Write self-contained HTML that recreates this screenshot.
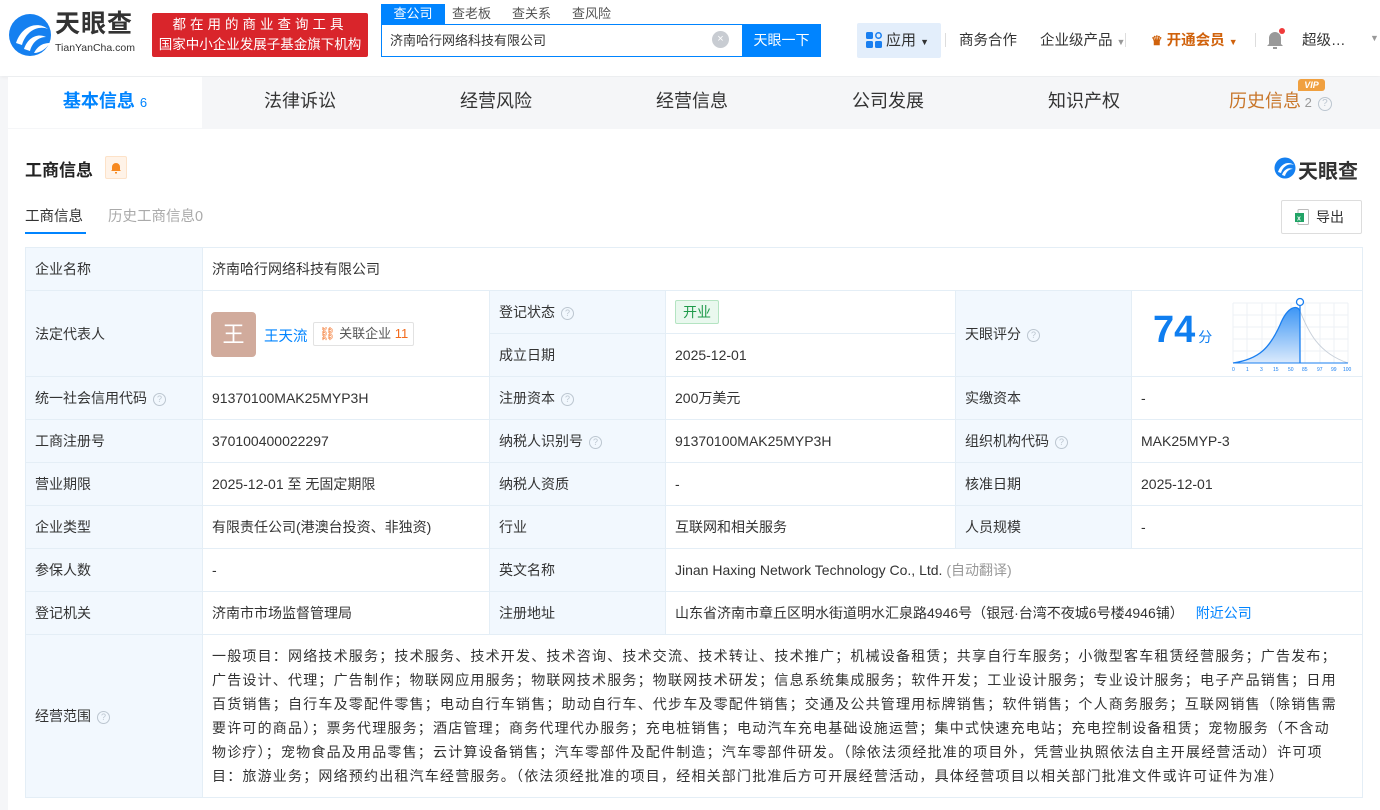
<!DOCTYPE html>
<html><head><meta charset="utf-8"><style>
*{box-sizing:border-box;margin:0;padding:0}
body{width:1380px;height:810px;overflow:hidden;background:#f5f6f8;font-family:"Liberation Sans","Noto Sans CJK SC",sans-serif;color:#333;font-size:14px;position:relative}
.hdr{position:absolute;left:0;top:0;width:1380px;height:76px;background:#fff;box-shadow:0 1px 4px rgba(0,0,0,.06)}
.abs{position:absolute}
.tabs{position:absolute;left:8px;top:77px;width:1372px;height:51px;background:#f5f6f8}
.tab{position:absolute;top:0;height:51px;line-height:48px;font-size:18px;color:#333;text-align:center}
.card{position:absolute;left:8px;top:129px;width:1372px;height:681px;background:#fff}
table{position:absolute;left:25px;top:247px;border-collapse:collapse;table-layout:fixed;width:1337px}
td{border:1px solid #e4eef6;padding:0 9px;font-size:14px;color:#333;vertical-align:middle}
td.l{background:#f2f8fe}
.q{display:inline-block;width:13px;height:13px;border:1px solid #bcc6d0;border-radius:50%;font-size:9px;line-height:11px;text-align:center;color:#bcc6d0;margin-left:6px;vertical-align:1px}
</style></head><body>
<div class="hdr">
 <svg class="abs" style="left:8px;top:13px" width="46" height="44" viewBox="0 0 46 44"><circle cx="22" cy="22" r="21" fill="#1580f0"/><path d="M8 30 C14 12 30 8 40 16 C30 12 18 18 14 32Z" fill="#fff"/><path d="M16 36 C20 24 30 20 38 24 C30 24 24 30 22 38Z" fill="#fff"/><path d="M26 40 C30 32 36 30 42 30 C38 36 32 40 26 40Z" fill="#fff"/></svg>
 <div class="abs" style="left:55px;top:9px;font-size:25px;line-height:30px;font-weight:bold;color:#333;letter-spacing:1px">天眼查</div>
 <div class="abs" style="left:55px;top:42px;font-size:10.5px;line-height:12px;color:#333">TianYanCha.com</div>
 <div class="abs" style="left:152px;top:13px;width:216px;height:44px;background:#d9252b;border-radius:2px;color:#fff;font-size:13.5px;text-align:center;line-height:20px;padding-top:2px"><span style="letter-spacing:4px">都在用的商业查询工具</span><br>国家中小企业发展子基金旗下机构</div>
 <div class="abs" style="left:381px;top:4px;width:64px;height:21px;background:#0084ff;color:#fff;font-size:13px;text-align:center;line-height:20px">查公司</div>
 <div class="abs" style="left:452px;top:4px;font-size:13px;color:#555;line-height:20px">查老板</div>
 <div class="abs" style="left:512px;top:4px;font-size:13px;color:#555;line-height:20px">查关系</div>
 <div class="abs" style="left:572px;top:4px;font-size:13px;color:#555;line-height:20px">查风险</div>
 <div class="abs" style="left:381px;top:24px;width:362px;height:33px;border:1px solid #0084ff;background:#fff;font-size:13px;line-height:31px;padding-left:8px">济南哈行网络科技有限公司</div>
 <div class="abs" style="left:712px;top:31px;width:17px;height:17px;border-radius:50%;background:#c8ccd2;color:#fff;font-size:11px;text-align:center;line-height:17px">×</div>
 <div class="abs" style="left:742px;top:24px;width:79px;height:33px;background:#0084ff;color:#fff;font-size:14px;text-align:center;line-height:33px">天眼一下</div>
 <div class="abs" style="left:857px;top:23px;width:84px;height:35px;background:#e3eefb;border-radius:2px"></div>
 <svg class="abs" style="left:866px;top:32px" width="16" height="16"><rect x="0" y="0" width="7" height="7" rx="1.5" fill="#1a7ff0"/><rect x="0" y="9" width="7" height="7" rx="1.5" fill="#1a7ff0"/><rect x="9" y="9" width="7" height="7" rx="1.5" fill="#1a7ff0"/><circle cx="12.5" cy="3.5" r="2.7" fill="none" stroke="#1a7ff0" stroke-width="1.5"/></svg>
 <div class="abs" style="left:886px;top:29px;font-size:15px;color:#333">应用 <span style="font-size:9px">▼</span></div>
 <div class="abs" style="left:945px;top:33px;width:1px;height:14px;background:#ddd"></div>
 <div class="abs" style="left:959px;top:29px;font-size:14.5px;color:#333">商务合作</div>
 <div class="abs" style="left:1040px;top:29px;font-size:14.5px;color:#333">企业级产品 <span style="font-size:9px;color:#999">▼</span></div>
 <div class="abs" style="left:1125px;top:33px;width:1px;height:14px;background:#ddd"></div>
 <div class="abs" style="left:1151px;top:29px;font-size:14.5px;color:#d0620c;font-weight:bold"><span style="font-size:13px">♛</span> 开通会员 <span style="font-size:9px">▼</span></div>
 <div class="abs" style="left:1255px;top:33px;width:1px;height:14px;background:#ddd"></div>
 <svg class="abs" style="left:1266px;top:28px" width="20" height="22"><path d="M3 16 L3 10 A6 6 0 0 1 15 10 L15 16 L17 18 L1 18Z M7 19 h4 v2 h-4z" fill="#999"/><circle cx="16" cy="3" r="3" fill="#f03a3a"/></svg>
 <div class="abs" style="left:1302px;top:29px;font-size:14.5px;color:#333">超级…</div>
 <div class="abs" style="left:1370px;top:33px;font-size:9px;color:#999">▼</div>
</div>
<div class="tabs">
 <div class="tab" style="left:0;width:194px;background:#fff;color:#0084ff;font-weight:bold">基本信息 <span style="font-size:13px;font-weight:normal">6</span></div>
 <div class="tab" style="left:194px;width:196px">法律诉讼</div>
 <div class="tab" style="left:390px;width:196px">经营风险</div>
 <div class="tab" style="left:586px;width:196px">经营信息</div>
 <div class="tab" style="left:782px;width:196px">公司发展</div>
 <div class="tab" style="left:978px;width:196px">知识产权</div>
 <div class="tab" style="left:1221px;width:130px;color:#c8762a;text-align:left">历史信息<span style="font-size:13px;color:#999"> 2</span><span class="q" style="width:14px;height:14px;font-size:10px;line-height:12px">?</span></div>
 <div class="abs" style="left:1290px;top:2px;width:27px;height:12px;background:#f0a040;border-radius:3px 3px 3px 0;color:#fff;font-size:9px;font-weight:bold;font-style:italic;text-align:center;line-height:12px">VIP</div>
</div>
<div class="card"></div>
<div class="abs" style="left:25px;top:156px;font-size:17px;font-weight:bold;color:#222">工商信息</div>
<div class="abs" style="left:105px;top:156px;width:22px;height:23px;background:#fff3e8;border:1px solid #fde2c8;border-radius:2px"></div>
<svg class="abs" style="left:110px;top:161px" width="12" height="13"><path d="M2 9 L2 6 A4 4 0 0 1 10 6 L10 9 L11 10 L1 10Z M5 11 h2 v1.5 h-2z" fill="#f7891f"/></svg>
<svg class="abs" style="left:1274px;top:157px" width="22" height="22"><circle cx="11" cy="11" r="10.5" fill="#1580f0"/><path d="M4 15 C7 6 15 4 20 8 C15 6 9 9 7 16Z" fill="#fff"/><path d="M8 18 C10 12 15 10 19 12 C15 12 12 15 11 19Z" fill="#fff"/></svg>
<div class="abs" style="left:1298px;top:155px;font-size:20px;font-weight:bold;color:#333">天眼查</div>
<div class="abs" style="left:25px;top:205px;font-size:14.5px;color:#333">工商信息</div>
<div class="abs" style="left:25px;top:232px;width:61px;height:2px;background:#0084ff"></div>
<div class="abs" style="left:108px;top:205px;font-size:14.5px;color:#aaa">历史工商信息0</div>
<div class="abs" style="left:1281px;top:200px;width:81px;height:34px;border:1px solid #ddd;border-radius:2px;background:#fff"></div>
<svg class="abs" style="left:1295px;top:209px" width="14" height="16"><rect x="3" y="0.5" width="10.5" height="15" rx="1" fill="#fff" stroke="#bbb"/><rect x="0" y="4" width="9" height="9" fill="#21a366"/><text x="2" y="11.5" font-size="7" fill="#fff" font-family="Liberation Sans" font-weight="bold">x</text></svg>
<div class="abs" style="left:1316px;top:207px;font-size:14px;color:#333">导出</div>

<table>
<colgroup><col style="width:177px"><col style="width:287px"><col style="width:176px"><col style="width:290px"><col style="width:176px"><col style="width:231px"></colgroup>
<tr style="height:43px"><td class="l">企业名称</td><td colspan="5">济南哈行网络科技有限公司</td></tr>
<tr style="height:43px"><td class="l" rowspan="2">法定代表人</td><td rowspan="2" style="position:relative">
 <div class="abs" style="left:8px;top:21px;width:45px;height:45px;background:#d1ab9c;border-radius:4px;color:#fff;font-size:22px;text-align:center;line-height:45px">王</div>
 <span class="abs" style="left:61px;top:34px;color:#0084ff;font-size:14.5px">王天流</span>
 <span class="abs" style="left:110px;top:31px;height:24px;border:1px solid #e2e2e2;border-radius:2px;padding:0 5px;line-height:22px;font-size:13px;color:#555"><span style="color:#f26b1d">⛓</span> 关联企业 <span style="color:#f26b1d">11</span></span>
</td><td class="l">登记状态<span class="q">?</span></td><td><span style="display:inline-block;border:1px solid #b4e4c2;background:#e9f8ee;color:#1f9a4a;padding:0 7px;line-height:22px;font-size:14px;border-radius:2px">开业</span></td>
<td class="l" rowspan="2">天眼评分<span class="q">?</span></td><td rowspan="2" style="position:relative">
 <div class="abs" style="left:21px;top:18px;font-size:38px;font-weight:bold;color:#0f7ef0;font-family:'Liberation Sans',sans-serif">74<span style="font-size:14px;font-weight:normal;margin-left:3px">分</span></div>
 <svg class="abs" style="left:98px;top:6px" width="122" height="76" viewBox="0 0 122 76">
  <defs><linearGradient id="g" x1="0" y1="0" x2="0" y2="1"><stop offset="0" stop-color="#3d96f5"/><stop offset="1" stop-color="#dbeafc"/></linearGradient></defs>
  <g stroke="#eef1f5" stroke-width="1"><path d="M3 6H118M3 18H118M3 30H118M3 42H118M3 54H118M3 66H118M3 6V66M17 6V66M32 6V66M46 6V66M61 6V66M75 6V66M90 6V66M104 6V66M118 6V66"/></g>
  <path d="M3 66 C30 62 40 50 50 28 C58 8 68 8 70 14 L70 66Z" fill="url(#g)"/>
  <path d="M3 66 C30 62 40 50 50 28 C58 8 68 8 70 14" fill="none" stroke="#1a7ff0" stroke-width="1.3"/>
  <path d="M70 14 C78 34 88 56 118 66" fill="none" stroke="#c8d0da" stroke-width="1"/>
  <line x1="70" y1="6" x2="70" y2="66" stroke="#1a7ff0" stroke-width="1.3"/>
  <circle cx="70" cy="5" r="3.5" fill="#fff" stroke="#1a7ff0" stroke-width="1.3"/><line x1="3" y1="66" x2="118" y2="66" stroke="#1a7ff0"/>
  <g font-size="5" fill="#1a7ff0" font-family="Liberation Sans"><text x="2" y="74">0</text><text x="16" y="74">1</text><text x="30" y="74">3</text><text x="43" y="74">15</text><text x="58" y="74">50</text><text x="72" y="74">85</text><text x="87" y="74">97</text><text x="101" y="74">99</text><text x="113" y="74">100</text></g>
 </svg>
</td></tr>
<tr style="height:43px"><td class="l">成立日期</td><td>2025-12-01</td></tr>
<tr style="height:43px"><td class="l">统一社会信用代码<span class="q">?</span></td><td>91370100MAK25MYP3H</td><td class="l">注册资本<span class="q">?</span></td><td>200万美元</td><td class="l">实缴资本</td><td>-</td></tr>
<tr style="height:43px"><td class="l">工商注册号</td><td>370100400022297</td><td class="l">纳税人识别号<span class="q">?</span></td><td>91370100MAK25MYP3H</td><td class="l">组织机构代码<span class="q">?</span></td><td>MAK25MYP-3</td></tr>
<tr style="height:43px"><td class="l">营业期限</td><td>2025-12-01 至 无固定期限</td><td class="l">纳税人资质</td><td>-</td><td class="l">核准日期</td><td>2025-12-01</td></tr>
<tr style="height:43px"><td class="l">企业类型</td><td>有限责任公司(港澳台投资、非独资)</td><td class="l">行业</td><td>互联网和相关服务</td><td class="l">人员规模</td><td>-</td></tr>
<tr style="height:43px"><td class="l">参保人数</td><td>-</td><td class="l">英文名称</td><td colspan="3">Jinan Haxing Network Technology Co., Ltd. <span style="color:#999">(自动翻译)</span></td></tr>
<tr style="height:43px"><td class="l">登记机关</td><td>济南市市场监督管理局</td><td class="l">注册地址</td><td colspan="3">山东省济南市章丘区明水街道明水汇泉路4946号（银冠·台湾不夜城6号楼4946铺）<span style="color:#0084ff;margin-left:12px">附近公司</span></td></tr>
<tr style="height:163px"><td class="l">经营范围<span class="q">?</span></td><td colspan="5" style="line-height:24px;white-space:nowrap;font-size:14px;letter-spacing:1.2px">一般项目：网络技术服务；技术服务、技术开发、技术咨询、技术交流、技术转让、技术推广；机械设备租赁；共享自行车服务；小微型客车租赁经营服务；广告发布；<br>广告设计、代理；广告制作；物联网应用服务；物联网技术服务；物联网技术研发；信息系统集成服务；软件开发；工业设计服务；专业设计服务；电子产品销售；日用<br>百货销售；自行车及零配件零售；电动自行车销售；助动自行车、代步车及零配件销售；交通及公共管理用标牌销售；软件销售；个人商务服务；互联网销售（除销售需<br>要许可的商品）；票务代理服务；酒店管理；商务代理代办服务；充电桩销售；电动汽车充电基础设施运营；集中式快速充电站；充电控制设备租赁；宠物服务（不含动<br>物诊疗）；宠物食品及用品零售；云计算设备销售；汽车零部件及配件制造；汽车零部件研发。（除依法须经批准的项目外，凭营业执照依法自主开展经营活动）许可项<br>目：旅游业务；网络预约出租汽车经营服务。（依法须经批准的项目，经相关部门批准后方可开展经营活动，具体经营项目以相关部门批准文件或许可证件为准）</td></tr>
</table>
</body></html>
